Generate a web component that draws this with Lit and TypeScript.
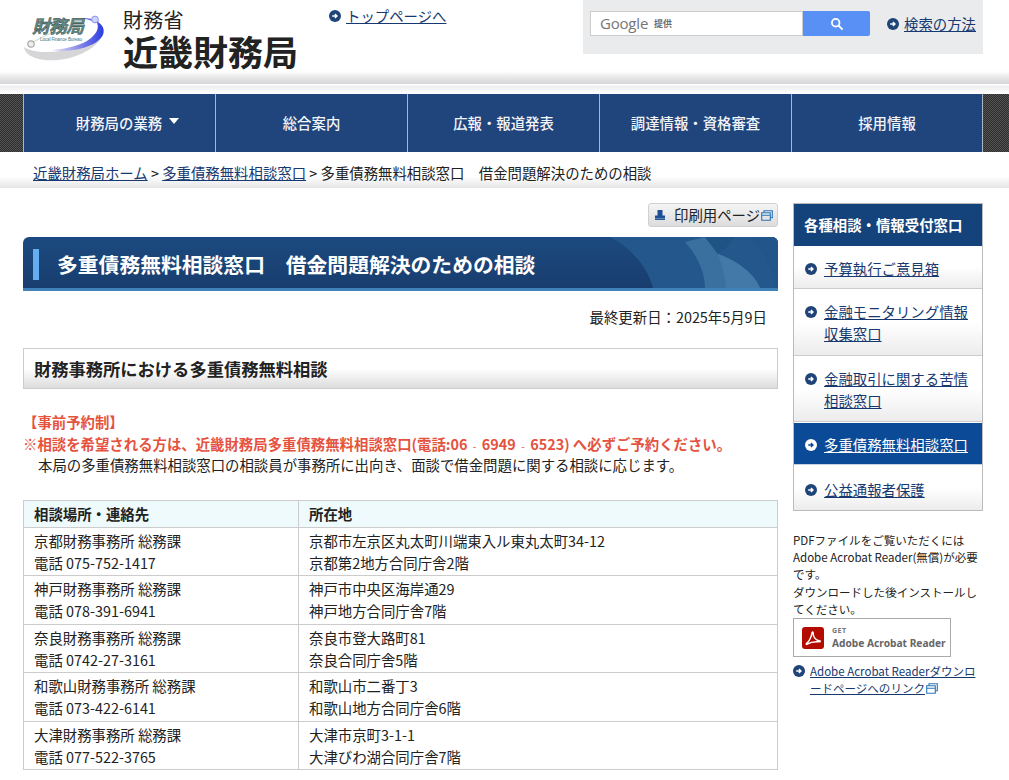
import { LitElement, html, css, svg } from "lit";
import { customElement } from "lit/decorators.js";

const arrow = (bg = "#1f4477", fg = "#fff") => html`<svg class="arrow" viewBox="0 0 12 12" aria-hidden="true"><circle cx="6" cy="6" r="6" fill="${bg}"/><path d="M3.2 6h4.6M5.9 3.9 8 6 5.9 8.1" fill="none" stroke="${fg}" stroke-width="1.4"/></svg>`;
const ext = html`<svg class="ext" viewBox="0 0 12 11" aria-hidden="true"><path d="M3 2.5V.7h8.3v7H9.4M.7 2.7h8.6v7.6H.7ZM.7 5.2h8.6" fill="none" stroke="#2a75b5" stroke-width="1.1"/></svg>`;

const navItems = ["財務局の業務", "総合案内", "広報・報道発表", "調達情報・資格審査", "採用情報"];
const rows = [
  ["京都財務事務所 総務課", "電話 075-752-1417", "京都市左京区丸太町川端東入ル東丸太町34-12", "京都第2地方合同庁舎2階"],
  ["神戸財務事務所 総務課", "電話 078-391-6941", "神戸市中央区海岸通29", "神戸地方合同庁舎7階"],
  ["奈良財務事務所 総務課", "電話 0742-27-3161", "奈良市登大路町81", "奈良合同庁舎5階"],
  ["和歌山財務事務所 総務課", "電話 073-422-6141", "和歌山市二番丁3", "和歌山地方合同庁舎6階"],
  ["大津財務事務所 総務課", "電話 077-522-3765", "大津市京町3-1-1", "大津びわ湖合同庁舎7階"],
];
const sideItems = [
  { t: "予算執行ご意見箱" },
  { t: "金融モニタリング情報収集窓口" },
  { t: "金融取引に関する苦情相談窓口" },
  { t: "多重債務無料相談窓口", active: true },
  { t: "公益通報者保護" },
];

@customElement("app-root")
export class AppRoot extends LitElement {
  static styles = css`
    :host { display: block; width: 1009px; height: 780px; overflow: hidden; background: #fff; color: #222; font: 14.4px/22px "Noto Sans CJK JP", "Noto Sans", sans-serif; }
    * { box-sizing: border-box; }
    a { color: #17396f; text-decoration: underline; }
    p, h1, h2, ul { margin: 0; padding: 0; list-style: none; }
    .arrow { width: 12px; height: 12px; flex: none; display: block; }
    .ext { width: 12px; height: 11px; display: inline-block; vertical-align: -1px; margin-left: 1px; }

    .masthead { height: 94px; background: linear-gradient(#fff 0, #fff 71px, #e9e9ea 77px, #d4d5d7 84px, #fff 84px, #fff 85px, #eeeeee 86px, #fff 94px); display: flex; padding-left: 23px; }
    .logo { width: 84px; height: 50px; margin-top: 12px; flex: none; }
    .title { margin-left: 16px; width: 206px; flex: none; color: #222; padding-top: 9px; }
    .t1 { font-size: 20px; line-height: 21px; letter-spacing: .3px; }
    .t2 { font-size: 35px; line-height: 42px; font-weight: 700; white-space: nowrap; }
    .toplink { display: flex; align-items: center; gap: 5px; height: 22px; margin-top: 5px; width: 254px; flex: none; white-space: nowrap; }
    .search { width: 400px; height: 54px; background: #e9ebed; display: flex; align-items: flex-start; padding: 11px 0 0 7px; flex: none; }
    .gbox { width: 213px; height: 25px; background: #fff; border: 1px solid #ccc; display: flex; align-items: center; padding-left: 9px; gap: 6px; }
    .google { font: 400 15px/1 "Open Sans", sans-serif; color: #757575; letter-spacing: -.2px; }
    .teikyo { font-size: 9px; line-height: 1; color: #6f6f6f; font-weight: 700; }
    .gbtn { width: 67px; height: 25px; background: #5890f5; border-radius: 0 2px 2px 0; display: flex; align-items: center; justify-content: center; }
    .gbtn svg { width: 14px; height: 14px; }
    .how { display: flex; align-items: center; gap: 5px; margin-left: 17px; height: 25px; white-space: nowrap; }

    .nav { height: 58px; display: flex; padding: 0 26px 0 23px; background: conic-gradient(#2f2f2f 25%, #525252 0 50%, #2f2f2f 0 75%, #525252 0) 0 0 / 2px 2px; }
    .nav > div { width: 192px; height: 58px; background: #20447c; border-left: 1px solid #a9b5c8; color: #f2f4f8; font-weight: 500; display: flex; align-items: center; justify-content: center; gap: 7px; }
    .nav > div:first-child { padding-left: 16px; }
    .nav > div:last-child { border-right: 1px solid #a9b5c8; }
    .caret { width: 0; height: 0; border: 5px solid transparent; border-top: 6px solid #fff; border-bottom: 0; margin-top: -4px; }

    .crumb { height: 36px; padding: 10px 0 0 33px; white-space: pre; background: linear-gradient(#fff 0, #fff 24px, #e6e6e6 36px); }

    .main { display: flex; padding: 15px 26px 0 23px; gap: 15px; align-items: flex-start; }
    .content { width: 755px; flex: none; }
    .side { width: 190px; flex: none; }

    .printrow { display: flex; justify-content: flex-end; }
    .print { width: 130px; height: 24px; background: linear-gradient(#f5f5f5, #dcdcdc); border: 1px solid #d0d0d0; border-radius: 3px; display: flex; align-items: center; padding-left: 6px; white-space: nowrap; color: #222; }
    .print .pi { width: 10px; height: 10px; margin-right: 9px; flex: none; }
    .banner { position: relative; overflow: hidden; margin-top: 10px; height: 54px; background: linear-gradient(#1b4a80, #193d6e); border-bottom: 3px solid #3f82b9; border-radius: 6px 6px 0 0; padding: 12px 0 0 10px; }
    .banner svg { position: absolute; right: 0; top: 0; width: 178px; height: 51px; }
    .banner h1 { position: relative; border-left: 6px solid #63aef0; height: 31px; padding-left: 18px; font-size: 20.8px; line-height: 31px; font-weight: 700; color: #fff; white-space: pre; }
    .date { text-align: right; padding-right: 11px; margin-top: 15px; }
    .sec { margin-top: 20px; height: 41px; border: 1px solid #ccc; background: linear-gradient(#fff 0, #fff 50%, #dcdcdc 100%); padding-left: 10px; }
    .sec h2 { font-size: 17.28px; line-height: 40px; font-weight: 700; color: #222; }
    .notice { margin-top: 22px; }
    .red { color: #e5533f; font-weight: 700; height: 22px; white-space: nowrap; }
    .body { padding-left: 15px; line-height: 20px; }
    .dash { display: inline-block; width: 14.4px; line-height: 1; text-align: center; font-weight: 400; font-family: "Noto Sans", sans-serif; font-size: 11px; color: #e5705f; }

    table { margin-top: 25px; width: 755px; border-collapse: collapse; table-layout: fixed; }
    th, td { border: 1px solid #ccc; padding: 0 10px; text-align: left; vertical-align: middle; font-weight: 400; }
    th { background: #eefafb; font-weight: 700; height: 27px; line-height: 22px; }
    td { height: 48px; line-height: 22px; padding-top: 1px; }
    tr:nth-child(odd) td { height: 49px; padding-top: 0; }
    col.a { width: 275px; }

    .menu { border: 1px solid #bbb; }
    .menu h3 { margin: 0; height: 42px; background: #14427a; color: #fff; font-size: 14.4px; font-weight: 700; line-height: 42px; padding-left: 10px; white-space: nowrap; }
    .menu li { display: flex; gap: 7px; padding: 12px 10px 9px 11px; background: linear-gradient(#fff 50%, #ececec); border-bottom: 1px solid #ccc; }
    .menu li:nth-child(1) { padding-bottom: 8px; }
    .menu li:nth-child(2) { padding-bottom: 10px; }
    .menu li .arrow { margin-top: 5px; }
    .menu li:last-child { border-bottom: 0; padding-top: 13px; padding-bottom: 9px; }
    .menu li a { flex: 1; }
    .menu li.active { background: #0b4a96; margin: 1px 0; border-bottom: 1px solid #c5d3e0; padding-top: 11px; padding-bottom: 8px; }
    .menu li.active a { color: #fff; }
    .pdf { margin-top: 21px; font-size: 11.52px; line-height: 17.2px; color: #222; }
    .adobe { width: 158px; height: 39px; border: 1px solid #aaa; display: flex; align-items: center; padding-left: 8px; gap: 8px; }
    .adobe svg { width: 22px; height: 22px; flex: none; }
    .adobe .txt { padding-top: 1px; }
    .adobe .g { font: 700 7px/10px "Noto Sans", sans-serif; color: #777; letter-spacing: .5px; }
    .adobe .r { font: 700 10.2px/14px "Noto Sans", sans-serif; color: #666; white-space: nowrap; }
    .dl { display: flex; gap: 5px; margin-top: 6px; font-size: 11.52px; line-height: 17px; }
    .dl .arrow { margin-top: 2px; }
    .dl a { flex: 1; word-break: break-all; }
  `;

  render() {
    return html`
      <div class="masthead">
        <svg class="logo" viewBox="0 0 84 50" role="img" aria-label="財務局">
          <defs>
            <linearGradient id="sw" x1="0" x2="1"><stop offset="0" stop-color="#eceaf5"/><stop offset=".5" stop-color="#8f90e8"/><stop offset="1" stop-color="#2b3be0"/></linearGradient>
          </defs>
          <path d="M1 35C2 46 22 51 42 47C62 43 78 32 81 20C76 30 60 36 38 39C22 41 8 40 1 35Z" fill="#d6d6d8"/>
          <path d="M73 9C84 14 84 26 68 33C55 39 40 40 28 38C44 37 60 33 68 26C74 21 77 15 73 9Z" fill="url(#sw)"/>
          <path d="M58 6C66 6 72 7 76 10L73 11C70 9 65 7 58 6Z" fill="#5a66e8"/>
          <path d="M8 31 30 20" stroke="#a9c9bd" stroke-width=".7"/>
          <circle cx="8" cy="32" r="3.2" fill="#eee" stroke="#a8aaa8" stroke-width="1.2"/>
          <circle cx="72" cy="7.5" r="3.4" fill="#cfd2fb" stroke="#8f93ec" stroke-width="1"/>
          <text x="9" y="21" font-size="18" font-weight="700" font-style="italic" fill="#5c8a84" stroke="#333" stroke-width=".35" font-family="Noto Sans CJK JP, sans-serif" textLength="52">財務局</text>
          <text x="17" y="29" font-size="4.6" fill="#3c7a88" font-family="Liberation Sans, sans-serif" textLength="42">Local Finance Bureau</text>
        </svg>
        <div class="title">
          <div class="t1">財務省</div>
          <div class="t2">近畿財務局</div>
        </div>
        <div class="toplink">${arrow()}<a href="#">トップページへ</a></div>
        <div class="search">
          <div class="gbox"><span class="google">Google</span><span class="teikyo">提供</span></div>
          <div class="gbtn"><svg viewBox="0 0 14 14" aria-hidden="true"><circle cx="5.7" cy="5.7" r="3.8" fill="none" stroke="#fff" stroke-width="1.8"/><path d="m8.6 8.6 4 4" stroke="#fff" stroke-width="2"/></svg></div>
          <div class="how">${arrow()}<a href="#">検索の方法</a></div>
        </div>
      </div>

      <div class="nav">
        ${navItems.map((n, i) => html`<div>${n}${i === 0 ? html`<span class="caret"></span>` : ""}</div>`)}
      </div>

      <div class="crumb"><a href="#">近畿財務局ホーム</a> &gt; <a href="#">多重債務無料相談窓口</a> &gt; 多重債務無料相談窓口　借金問題解決のための相談</div>

      <div class="main">
        <div class="content">
          <div class="printrow">
            <div class="print">
              <svg class="pi" viewBox="0 0 10 10" aria-hidden="true"><path d="M2.5 0h5v5.5H10V10H0V5.5h2.5Z" fill="#1c4f94"/><path d="M0 8.6h10" stroke="#bcd" stroke-width=".5"/></svg>印刷用ページ${ext}
            </div>
          </div>
          <div class="banner">
            <svg viewBox="0 0 178 51" preserveAspectRatio="none" aria-hidden="true">
              ${svg`<path d="M10 0C30 10 48 30 53 51H178V0Z" fill="#24588c"/>
              <path d="M85 5C100 22 105 38 105 51H160C155 38 140 25 118 17L105 0Z" fill="#39709f"/>
              <path d="M118 17C140 25 155 38 160 51H126C125 38 122 28 118 17Z" fill="#4279a9"/>
              <path d="M105 0H135L125 12Q119 15 118 17Z" fill="#1f5285"/>
              <path d="M150 0C160 12 172 30 176 51H178V0Z" fill="#22568a"/>`}
            </svg>
            <h1>多重債務無料相談窓口　借金問題解決のための相談</h1>
          </div>
          <p class="date">最終更新日：2025年5月9日</p>
          <div class="sec"><h2>財務事務所における多重債務無料相談</h2></div>
          <div class="notice">
            <p class="red">【事前予約制】</p>
            <p class="red">※相談を希望される方は、近畿財務局多重債務無料相談窓口(電話:06<span class="dash">‐</span>6949<span class="dash">‐</span>6523) へ必ずご予約ください。</p>
            <p class="body">本局の多重債務無料相談窓口の相談員が事務所に出向き、面談で借金問題に関する相談に応じます。</p>
          </div>
          <table>
            <colgroup><col class="a" /><col /></colgroup>
            <tr><th>相談場所・連絡先</th><th>所在地</th></tr>
            ${rows.map((r) => html`<tr><td>${r[0]}<br />${r[1]}</td><td>${r[2]}<br />${r[3]}</td></tr>`)}
          </table>
        </div>

        <div class="side">
          <div class="menu">
            <h3>各種相談・情報受付窓口</h3>
            <ul>
              ${sideItems.map((s) => html`<li class="${s.active ? "active" : ""}">${s.active ? arrow("#fff", "#0b4a96") : arrow()}<a href="#">${s.t}</a></li>`)}
            </ul>
          </div>
          <div class="pdf">
            <p>PDFファイルをご覧いただくには<br />Adobe Acrobat Reader(無償)が必要です。<br />ダウンロードした後インストールしてください。</p>
            <div class="adobe">
              <svg viewBox="0 0 22 22" aria-hidden="true"><rect width="22" height="22" rx="3" fill="#b30b00"/><path d="M4.5 16.5C7 15 9.5 9.5 10 6C10.2 4.6 11.3 4.8 11.2 6.4C11 10 14 13.6 17.6 13.8C18.6 13.9 18.4 14.8 17.4 14.8C13 14.4 8.5 15 5.2 17.2C4.4 17.7 3.9 17 4.5 16.5Z" fill="none" stroke="#fff" stroke-width="1.5"/></svg>
              <div class="txt"><div class="g">GET</div><div class="r">Adobe Acrobat Reader</div></div>
            </div>
            <div class="dl">${arrow()}<a href="#">Adobe Acrobat Readerダウンロードページへのリンク${ext}</a></div>
          </div>
        </div>
      </div>
    `;
  }
}
